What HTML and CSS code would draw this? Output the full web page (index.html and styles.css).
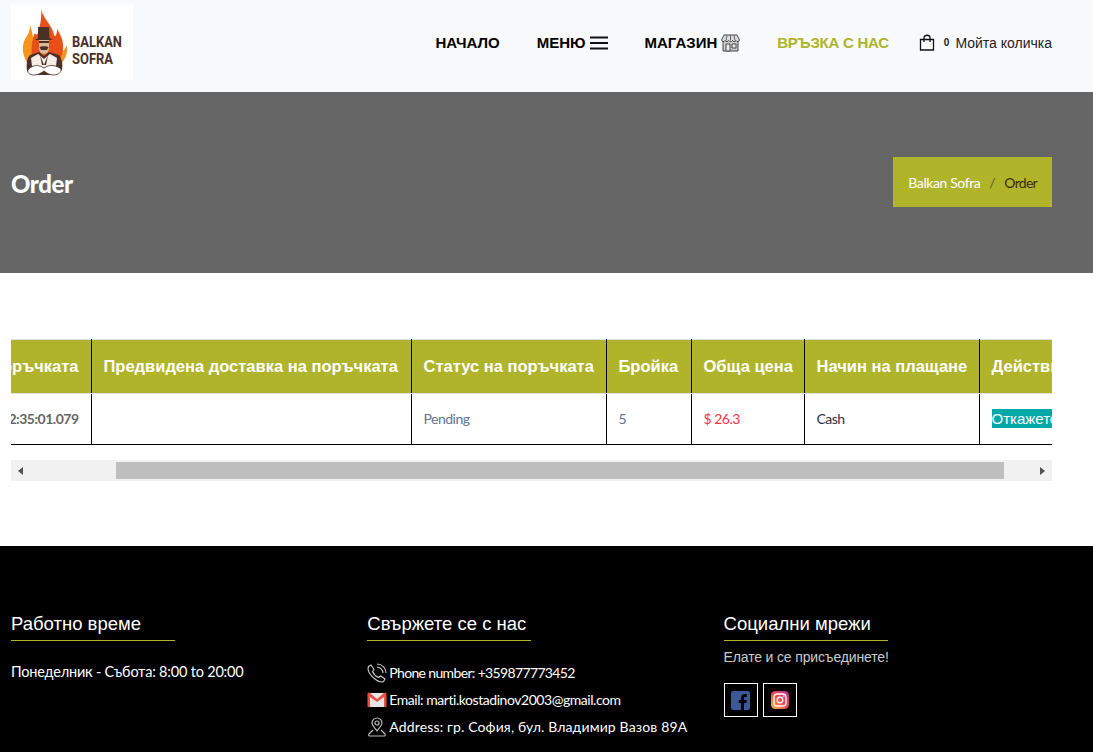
FILE: index.html
```html
<!DOCTYPE html>
<html lang="bg">
<head>
    <meta charset="UTF-8">
    <meta name="viewport" content="width=device-width, initial-scale=1.0">
    <title>Balkan Sofra - Order</title>
    <link rel="stylesheet" href="styles.css">
</head>
<body>

    <header class="header">
        <div class="logo">
            <svg width="122" height="75" viewBox="0 0 122 75">
                <path d="M19 20C22 28 21 32 24 36L26 60L17 59C12 52 10 42 14 34C17 30 19 26 19 20Z" fill="#f7941d"/>
                <path d="M52 46C54 44 55 42 56 40C57 47 55 54 49 60L47 54Z" fill="#f7941d"/>
                <path d="M30 4C32 13 39 18 42 26C43 30 44 33 45 30C46 28 46 26 46 24C50 30 53 37 52 45C51 53 47 58 42 62L22 60C20 50 20 38 23 30C24 27 25 29 26 30C29 22 31 13 30 4Z" fill="#e8501a"/>
                <path d="M27 22L38 22L38.500 33L42 35L24 35L27 33Z" fill="#4a3128"/>
                <path d="M28 35H38V43C38 46 36 49 33 49C30 49 28 46 28 43Z" fill="#d9b89c"/>
                <path d="M28 36H38V38H28ZM28.500 42C30 41 36 41 37.500 42L36 45H30Z" fill="#4a3128"/>
                <path d="M28 47L33 51L38 47L48 50C51 54 52 59 51 65L44 70H22L16 66C15 59 16 53 19 50Z" fill="#4a3128"/>
                <path d="M20 53L27 49L33 54L39 49L46 53L45 61L33 63L21 61Z" fill="#f6eee6"/>
                <path d="M29 50L33 60L37 50L35 60H31Z" fill="#4a3128"/>
                <path d="M17 65C21 60 27 59 33 63C39 59 45 60 50 64C51 67 47 70 43 70C38 70 36 68 33 66C30 68 27 70 23 70C19 70 16 68 17 65Z" fill="#fff" stroke="#4a3128" stroke-width=".8"/>
                <text class="logo-text" x="61" y="42" textLength="50" lengthAdjust="spacingAndGlyphs">BALKAN</text>
                <text class="logo-text" x="61" y="59" textLength="41" lengthAdjust="spacingAndGlyphs">SOFRA</text>
            </svg>
        </div>
        <nav class="nav">
            <a class="nav-link" href="#">НАЧАЛО</a>
            <a class="nav-link" href="#">МЕНЮ
                <svg class="nav-icon" width="18" height="14" viewBox="0 0 18 14"><path d="M0 1.500H18M0 7H18M0 12.500H18" stroke="#111" stroke-width="2.200"/></svg>
            </a>
            <a class="nav-link" href="#">МАГАЗИН
                <svg class="nav-icon" width="19" height="18" viewBox="0 0 19 18">
                    <path d="M2 7V17H17V7" fill="#ccc" stroke="#444"/>
                    <path d="M5 10H9V17H5ZM11 10H15V14H11Z" fill="#eee" stroke="#444"/>
                    <path d="M3 1H16L18.500 6C18 8 15.500 8 15 6.500C14 8 12 8 11.500 6.500C10.500 8 8.500 8 7.500 6.500C7 8 5 8 4 6.500C3.500 8 1 8 .5 6Z" fill="#ddd" stroke="#444"/>
                    <path d="M6 1.500L5 6.500M9.500 1.500V6.500M13 1.500L14 6.500" stroke="#444" stroke-width=".8"/>
                </svg>
            </a>
            <a class="nav-link nav-active" href="#">ВРЪЗКА С НАС</a>
            <a class="cart" href="#">
                <svg width="16" height="17" viewBox="0 0 16 17"><path d="M1.500 5.500H14.500V16H1.500ZM5 8V3.500C5 .5 11 .5 11 3.500V8" fill="none" stroke="#111" stroke-width="1.300"/></svg>
                <span class="cart-count">0</span>
                <span>Мойта количка</span>
            </a>
        </nav>
    </header>

    <section class="hero">
        <h1 class="hero-title">Order</h1>
        <div class="breadcrumb">
            <a href="#">Balkan Sofra</a>
            <span class="crumb-sep">/</span>
            <span class="crumb-current">Order</span>
        </div>
    </section>

    <section class="orders">
        <div class="table-wrap">
            <table class="order-table">
                <colgroup>
                    <col class="col-date">
                    <col class="col-delivery">
                    <col class="col-status">
                    <col class="col-qty">
                    <col class="col-total">
                    <col class="col-pay">
                    <col class="col-action">
                </colgroup>
                <thead>
                    <tr>
                        <th class="cell-date">Дата на поръчката</th>
                        <th>Предвидена доставка на поръчката</th>
                        <th>Статус на поръчката</th>
                        <th>Бройка</th>
                        <th>Обща цена</th>
                        <th>Начин на плащане</th>
                        <th>Действие</th>
                    </tr>
                </thead>
                <tbody>
                    <tr>
                        <td class="cell-date">2024-05-14 12:35:01.079</td>
                        <td></td>
                        <td class="cell-muted">Pending</td>
                        <td class="cell-muted">5</td>
                        <td class="cell-price">$ 26.3</td>
                        <td class="cell-dark">Cash</td>
                        <td><a class="cancel-btn" href="#">Откажете</a></td>
                    </tr>
                </tbody>
            </table>
        </div>
        <div class="scrollbar">
            <span class="arrow arrow-left"></span>
            <span class="thumb"></span>
            <span class="arrow arrow-right"></span>
        </div>
    </section>

    <footer class="footer">
        <div class="footer-col">
            <h3 class="footer-title">Работно време</h3>
            <p class="hours">Понеделник - Събота: 8:00 to 20:00</p>
        </div>
        <div class="footer-col">
            <h3 class="footer-title">Свържете се с нас</h3>
            <ul class="contact-list">
                <li>
                    <svg width="20" height="20" viewBox="0 0 20 20" fill="none" stroke="#ccc" stroke-width="1.100">
                        <path d="M4 2L7 6.500L5.500 8.500C6.500 11 9 13.500 11.500 14.500L13.500 13L18 16L16.500 18.500C15 19.500 12 19 8.500 16.500C4 13 1 9 1 5.500C1 4 2.500 2.500 4 2Z"/>
                        <path d="M10 4C13 4 16 7 16 10M10 1C15 1 19 5 19 10"/>
                    </svg>
                    <span class="contact-phone">Phone number: +359877773452</span>
                </li>
                <li>
                    <svg width="20" height="16" viewBox="0 0 20 16">
                        <path d="M1 1H19V15H1Z" fill="#e8e8e8"/>
                        <path d="M3 15V5L10 10L17 5V15H19.500V2C19.500 .5 18 .5 17 1L10 7L3 1C2 .5 .5 .5 .5 2V15Z" fill="#f04e45"/>
                    </svg>
                    <span class="contact-email">Email: marti.kostadinov2003@gmail.com</span>
                </li>
                <li>
                    <svg width="20" height="20" viewBox="0 0 20 20" fill="none" stroke="#bbb" stroke-width="1.200">
                        <path d="M10 14C7 10 5 8.500 5 6C5 3 7.500 1 10 1C12.500 1 15 3 15 6C15 8.500 13 10 10 14Z"/>
                        <circle cx="10" cy="6" r="2"/>
                        <path d="M6 13L2 17C1 18.500 2 19 3.500 19H16.500C18 19 19 18.500 18 17L14 13"/>
                    </svg>
                    <span class="contact-address">Address: гр. София, бул. Владимир Вазов 89А</span>
                </li>
            </ul>
        </div>
        <div class="footer-col">
            <h3 class="footer-title">Социални мрежи</h3>
            <p class="social-text">Елате и се присъединете!</p>
            <div class="social-links">
                <a class="social-link" href="#">
                    <svg width="19" height="19" viewBox="0 0 19 19">
                        <rect width="19" height="19" rx="2.500" fill="#3b5998"/>
                        <path d="M13 19V12H15.300L15.700 9H13V7.300C13 6.400 13.300 5.900 14.400 5.900H15.800V3.200C15.400 3.100 14.600 3 13.700 3C11.600 3 10.100 4.300 10.100 6.800V9H7.800V12H10.100V19Z" fill="#000"/>
                    </svg>
                </a>
                <a class="social-link" href="#">
                    <svg width="18" height="18" viewBox="0 0 18 18">
                        <defs>
                            <linearGradient id="insta" x1="0" y1="1" x2="1" y2="0">
                                <stop offset="0" stop-color="#fdc04e"/>
                                <stop offset=".45" stop-color="#f4524b"/>
                                <stop offset="1" stop-color="#b02a9c"/>
                            </linearGradient>
                        </defs>
                        <rect width="18" height="18" rx="4.500" fill="url(#insta)"/>
                        <rect x="3" y="3" width="12" height="12" rx="3.300" fill="none" stroke="#fff" stroke-width="1.300"/>
                        <circle cx="9" cy="9" r="2.800" fill="none" stroke="#fff" stroke-width="1.300"/>
                        <circle cx="12.700" cy="5.300" r=".8" fill="#fff"/>
                    </svg>
                </a>
            </div>
        </div>
    </footer>

</body>
</html>
```

FILE: styles.css
```css
* {
    box-sizing: border-box;
}
body {
    margin: 0;
    font-family: "Liberation Sans", Arial, sans-serif;
    background: #fff;
    overflow-x: hidden;
}
a {
    color: inherit;
    text-decoration: none;
}

/* header */
.header {
    display: flex;
    justify-content: space-between;
    align-items: center;
    height: 92px;
    padding: 0 41px 7px 11px;
    background: #f8f9fa;
}
.logo {
    width: 122px;
    height: 75px;
    background: #fff;
}
.logo svg {
    display: block;
}
.logo-text {
    font-family: Roboto, sans-serif;
    font-weight: 700;
    font-size: 15px;
    fill: #4a3128;
}
.nav {
    display: flex;
    align-items: center;
    gap: 37px;
}
.nav-link {
    display: flex;
    align-items: center;
    gap: 4px;
    font-size: 15px;
    font-weight: bold;
    color: #000;
}
.nav-active {
    letter-spacing: -0.25px;
    color: #afb42b;
}
.cart {
    display: flex;
    align-items: center;
    margin-left: -7px;
    font-size: 14px;
    color: #222;
}
.cart-count {
    margin: 0 6px 0 9px;
    font-size: 10px;
    font-weight: bold;
}

/* page title */
.hero {
    display: flex;
    justify-content: space-between;
    align-items: center;
    height: 181px;
    padding: 0 41px 0 11px;
    background: #666;
}
.hero-title {
    margin: 1px 0 0;
    font-family: Lato, sans-serif;
    font-size: 24px;
    font-weight: 900;
    letter-spacing: -0.4px;
    color: #fff;
}
.breadcrumb {
    display: flex;
    align-items: center;
    gap: 9px;
    height: 50px;
    padding: 0 15px;
    margin-top: -1px;
    font-family: Lato, sans-serif;
    font-size: 14px;
    letter-spacing: -0.4px;
    background: #afb42b;
    color: #fff;
}
.crumb-sep {
    color: #5a5a20;
}
.crumb-current {
    letter-spacing: -0.7px;
    color: #3a2c10;
}

/* orders table */
.orders {
    padding: 66px 41px 65px 11px;
}
.table-wrap {
    overflow: hidden;
}
.order-table {
    width: 1190px;
    margin-left: -160px;
    table-layout: fixed;
    border-collapse: collapse;
    border-bottom: 1px solid #000;
    white-space: nowrap;
}
.col-date { width: 240px; }
.col-delivery { width: 320px; }
.col-status { width: 195px; }
.col-qty { width: 85px; }
.col-total { width: 113px; }
.col-pay { width: 175px; }
.col-action { width: 122px; }
.order-table th,
.order-table td {
    padding: 0 12px;
    text-align: left;
    overflow: hidden;
    border-right: 1px solid #000;
}
.order-table th {
    height: 54px;
    font-size: 16.500px;
    font-weight: bold;
    color: #fff;
    background: #afb42b;
    border-top: 1px solid #dee2e6;
    border-bottom: 1px solid #dee2e6;
}
.order-table td {
    height: 51px;
    padding-bottom: 2px;
    font-family: Lato, sans-serif;
    font-size: 14px;
    letter-spacing: -0.5px;
}
.order-table .cell-date {
    text-align: right;
}
td.cell-date {
    font-weight: bold;
    color: #666;
}
.cell-muted {
    color: #5f7390;
}
.cell-price {
    color: #f5333f;
}
.cell-dark {
    color: #2b3240;
}
.cancel-btn {
    display: inline-block;
    padding: 1px 0;
    font-family: "Liberation Sans", Arial, sans-serif;
    font-size: 15px;
    letter-spacing: 0;
    color: #fff;
    background: #00a8a8;
}

/* horizontal scrollbar of the table */
.scrollbar {
    display: flex;
    align-items: center;
    height: 21px;
    margin-top: 15px;
    background: #f1f1f1;
}
.thumb {
    width: 888px;
    height: 17px;
    margin: 0 auto 0 93px;
    background: #bebebe;
}
.arrow {
    width: 0;
    height: 0;
    border-top: 4px solid transparent;
    border-bottom: 4px solid transparent;
}
.arrow-left {
    margin-left: 7px;
    border-right: 5px solid #505050;
}
.arrow-right {
    margin-right: 7px;
    border-left: 5px solid #505050;
}

/* footer */
.footer {
    display: grid;
    grid-template-columns: repeat(3, 356.300px);
    height: 206px;
    padding: 66px 0 0 11px;
    background: #000;
    color: #fff;
}
.footer-title {
    width: 164px;
    margin: 0;
    padding-bottom: 4px;
    font-size: 18.500px;
    font-weight: normal;
    line-height: 24px;
    border-bottom: 1px solid #afb42b;
}
.hours {
    margin: 21px 0 0;
    font-family: Lato, sans-serif;
    font-size: 14.500px;
    letter-spacing: -0.2px;
    line-height: 20px;
}
.contact-list {
    margin: 18px 0 0;
    padding: 0;
    list-style: none;
    font-family: Lato, sans-serif;
    font-size: 14px;
}
.contact-list li {
    display: flex;
    align-items: center;
    gap: 2px;
    height: 27px;
}
.contact-list svg {
    flex: none;
}
/* digits and latin letters run narrower than the cyrillic here */
.contact-phone {
    letter-spacing: -0.65px;
}
.contact-email {
    letter-spacing: -0.45px;
}
.contact-address {
    letter-spacing: 0.15px;
}
.social-text {
    margin: 6px 0 0;
    font-size: 14px;
    letter-spacing: -0.15px;
    line-height: 20px;
    color: #ccc;
}
.social-links {
    display: flex;
    gap: 5px;
    margin-top: 16px;
}
.social-link {
    display: flex;
    justify-content: center;
    align-items: center;
    width: 34px;
    height: 34px;
    border: 1px solid #fff;
}
```
